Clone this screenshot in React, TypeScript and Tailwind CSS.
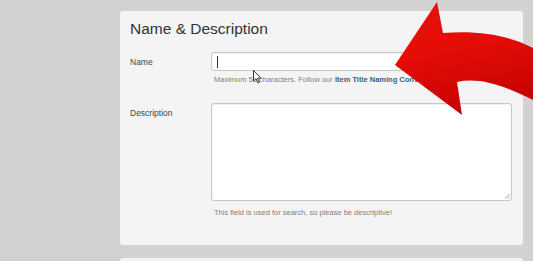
import React from "react";

function RedArrow() {
  return (
    <svg
      className="pointer-events-none absolute left-0 top-0"
      width={533}
      height={261}
      viewBox="0 0 533 261"
    >
      <defs>
        <linearGradient id="arrowFill" x1="0" y1="0" x2="0.3" y2="1">
          <stop offset="0" stopColor="#e3140b" />
          <stop offset="0.45" stopColor="#e60d07" />
          <stop offset="1" stopColor="#c70404" />
        </linearGradient>
      </defs>
      <path
        d="M395 65 L437 2 L443 33 C480 30 510 36 533 48 L540 52 L540 104 L533 100 C505 86 480 77 457 82 L462 115 Z"
        fill="url(#arrowFill)"
      />
    </svg>
  );
}

function MouseCursor() {
  return (
    <svg className="pointer-events-none absolute left-[253px] top-[70px]" width={9} height={14} viewBox="0 0 9 14">
      <path d="M0.5 0.5 L0.5 11 L3 8.6 L4.8 12.8 L6.3 12.2 L4.6 8.2 L8 8.2 Z" fill="#fff" stroke="#222" strokeWidth={0.9} />
    </svg>
  );
}

export default function App() {
  return (
    <div className="relative h-[261px] w-[533px] overflow-hidden bg-[#d3d2d0] font-['Liberation_Sans',Arial,sans-serif]">
      <div className="ml-[120px] mt-[11px] w-[403px] rounded-[3px] bg-[#f4f4f4] pb-[27px] pl-[10px] pr-[11px] pt-[10px]">
        <h2 className="text-[15.5px] leading-[16px] text-[#333]">Name &amp; Description</h2>

        <div className="mt-[15px] grid grid-cols-[81px_1fr]">
          <label className="pt-[5px] text-[8.5px] leading-[10px] text-[#444]">Name</label>
          <div>
            <div className="relative h-[19px] rounded-[3px] border border-[#c6c6c6] bg-white shadow-[inset_0_1px_1px_rgba(0,0,0,0.06)]">
              <span className="absolute left-[5px] top-[3px] h-[12px] w-px bg-[#333]" />
            </div>
            <p className="mt-[4px] pl-[3px] text-[7.5px] leading-[10px] text-[#808080]">
              Maximum 50 characters. Follow our{" "}
              <span className="font-bold text-[#3a6280]">Item Title Naming Convention</span>
            </p>
          </div>
        </div>

        <div className="mt-[18px] grid grid-cols-[81px_1fr]">
          <label className="pt-[5px] text-[8.5px] leading-[10px] text-[#444]">Description</label>
          <div>
            <div className="relative h-[98px] rounded-[3px] border border-[#c6c6c6] bg-white shadow-[inset_0_1px_1px_rgba(0,0,0,0.06)]">
              <svg className="absolute bottom-[1px] right-[1px]" width={6} height={6} viewBox="0 0 6 6">
                <path d="M5.5 1 L1 5.5 M5.5 3.5 L3.5 5.5" stroke="#888" strokeWidth={0.8} />
              </svg>
            </div>
            <p className="mt-[7px] pl-[3px] text-[7.5px] leading-[10px] text-[#808080]">
              This field is used for search, so please be descriptive!
            </p>
          </div>
        </div>
      </div>

      <div className="ml-[120px] mt-[13px] h-[20px] w-[403px] rounded-[3px] bg-[#f4f4f4]" />

      <MouseCursor />
      <RedArrow />
    </div>
  );
}
